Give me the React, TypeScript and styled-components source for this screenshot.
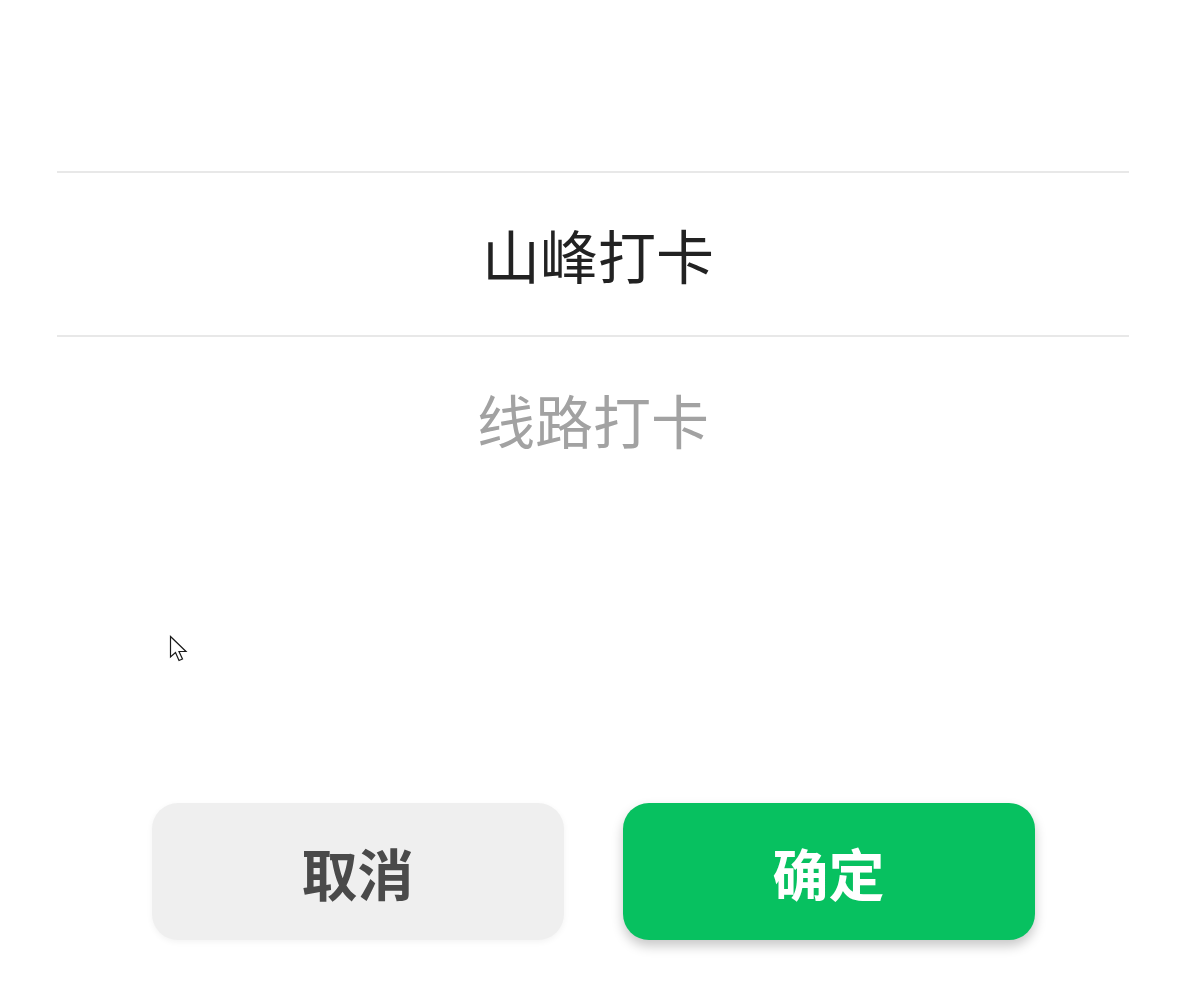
import { FC } from 'react';
import styled, { createGlobalStyle, css } from 'styled-components';

const GlobalStyle = createGlobalStyle`
    html, body {
        margin: 0;
        padding: 0;
        background: #ffffff;
    }
    body {
        font-family: 'Noto Sans CJK SC', 'Noto Sans', sans-serif;
    }
`;

const Page = styled.div`
    position: relative;
    min-height: 993px;
    padding: 8px 52px 0 57px;
    box-sizing: border-box;
    background: #ffffff;
`;

const Picker = styled.div`
    display: flex;
    flex-direction: column;
`;

type OptionProps = {
    $selected?: boolean;
    $blank?: boolean;
};

const Option = styled.div<OptionProps>`
    display: flex;
    align-items: center;
    justify-content: center;
    height: 164px;
    box-sizing: border-box;
    font-size: 58px;
    line-height: 1;
    color: #a2a2a2;

    ${({ $blank }) =>
        $blank &&
        css`
            height: 163px;
        `}

    ${({ $selected }) =>
        $selected &&
        css`
            height: 166px;
            padding-left: 10px;
            color: #222222;
            border-top: 2px solid #e8e8e8;
            border-bottom: 2px solid #e8e8e8;
        `}
`;

const ButtonRow = styled.div`
    display: flex;
    justify-content: center;
    gap: 59px;
    margin-top: 302px;
`;

type ButtonProps = {
    $primary?: boolean;
};

const Button = styled.button<ButtonProps>`
    width: 412px;
    height: 137px;
    border: none;
    border-radius: 26px;
    font-family: 'Noto Sans CJK SC', 'Noto Sans', sans-serif;
    font-size: 56px;
    font-weight: 700;
    line-height: 1;
    cursor: pointer;
    background: #efefef;
    color: #4a4a4a;
    box-shadow: 0 2px 6px rgba(0, 0, 0, 0.05);

    ${({ $primary }) =>
        $primary &&
        css`
            background: #07c160;
            color: #ffffff;
            box-shadow: 0 6px 12px rgba(0, 0, 0, 0.22);
        `}
`;

/* mouse pointer captured in the screenshot */
const Pointer = styled.svg`
    position: absolute;
    left: 169px;
    top: 635px;
    width: 20px;
    height: 30px;
    pointer-events: none;
`;

const options = [
    { label: '', blank: true },
    { label: '山峰打卡', selected: true },
    { label: '线路打卡' },
];

const App: FC = () => (
    <>
        <GlobalStyle />
        <Page>
            <Picker>
                {options.map((item, i) => (
                    <Option key={i} $selected={item.selected} $blank={item.blank}>
                        {item.label}
                    </Option>
                ))}
            </Picker>

            <ButtonRow>
                <Button>取消</Button>
                <Button $primary>确定</Button>
            </ButtonRow>

            <Pointer viewBox="0 0 20 30">
                <path
                    d="M1.5 1.5 L1.5 22 L6.5 17.5 L10 25.5 L13.5 24 L10 16.5 L17 16.5 Z"
                    fill="#ffffff"
                    stroke="#1a1a1a"
                    strokeWidth="1.2"
                    strokeLinejoin="miter"
                />
            </Pointer>
        </Page>
    </>
);

export default App;
